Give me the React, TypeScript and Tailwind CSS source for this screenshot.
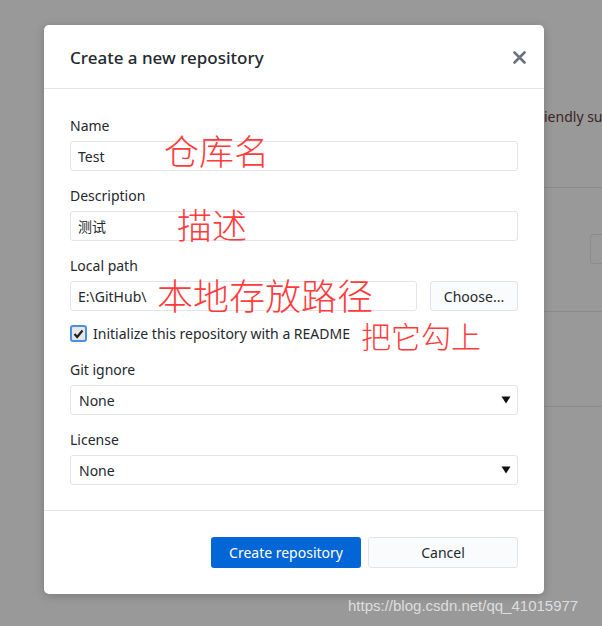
import React from "react";

const ui = { fontFamily: '"Noto Sans", "Noto Sans CJK SC", sans-serif' };
const cjk = { fontFamily: '"Noto Sans CJK SC", sans-serif' };

function Field({ label, children }: { label: string; children: React.ReactNode }) {
  return (
    <div className="flex flex-col">
      <div className="text-[14px] leading-[20px] text-[#24292e] mb-[5px]">{label}</div>
      {children}
    </div>
  );
}

function Input({ value, className = "" }: { value: string; className?: string }) {
  return (
    <div className={`h-[30px] rounded-[3px] border border-[#e1e4e8] bg-white flex items-center px-[7px] text-[14px] text-[#24292e] ${className}`}>
      {value}
    </div>
  );
}

function Select({ value }: { value: string }) {
  return (
    <div className="h-[30px] rounded-[3px] border border-[#e1e4e8] bg-white flex items-center justify-between pl-[8px] pr-[6px] text-[14px] text-[#24292e]">
      <span>{value}</span>
      <svg width="10" height="8" viewBox="0 0 10 8"><path d="M0.5 0.5 L9.5 0.5 L5 7.5 Z" fill="#111" /></svg>
    </div>
  );
}

export default function App() {
  return (
    <div className="relative w-[602px] h-[626px] bg-[#999999] overflow-hidden" style={ui}>
      {/* background page remnants */}
      <div className="absolute left-[544px] top-[106px] text-[14px] text-[#3a2626] whitespace-nowrap">iendly su</div>
      <div className="absolute left-[543px] right-0 top-[187px] h-px bg-[#8a8a8a]" />
      <div className="absolute left-[590px] top-[234px] w-[20px] h-[30px] border border-[#8c8c8c] rounded-[3px]" />
      <div className="absolute left-[543px] right-0 top-[311px] h-px bg-[#8a8a8a]" />
      <div className="absolute left-[543px] right-0 top-[406px] h-px bg-[#8a8a8a]" />

      {/* dialog */}
      <div className="absolute left-[44px] top-[25px] w-[500px] h-[569px] bg-white rounded-[5px] shadow-[0_2px_10px_rgba(0,0,0,0.2)] flex flex-col">
        <div className="h-[64px] border-b border-[#e1e4e8] flex items-center justify-between pl-[26px] pr-[18px]">
          <div className="text-[17px] text-[#24292e] font-medium mt-[2px]">Create a new repository</div>
          <svg width="13" height="13" viewBox="0 0 13 13" className="mt-[2px]">
            <path d="M1.5 1.5 L11.5 11.5 M11.5 1.5 L1.5 11.5" stroke="#6a737d" strokeWidth="2.6" strokeLinecap="round" />
          </svg>
        </div>

        <div className="flex-1 flex flex-col gap-[15px] px-[26px] pt-[27px] border-b border-[#e1e4e8]">
          <Field label="Name"><Input value="Test" /></Field>
          <Field label="Description"><Input value="测试" /></Field>
          <Field label="Local path">
            <div className="flex gap-[13px]">
              <Input value="E:\GitHub\" className="flex-1" />
              <div className="w-[88px] h-[30px] rounded-[3px] border border-[#e1e4e8] bg-[#fafbfc] flex items-center justify-center text-[14px] text-[#24292e]">Choose...</div>
            </div>
          </Field>
          <div className="h-[19px] flex items-center gap-[6px] -mt-[2px] mb-[2px]">
            <div className="w-[17px] h-[17px] rounded-[3px] border-2 border-[#4a90e2] bg-[#e6e6e6] flex items-center justify-center">
              <svg width="11" height="10" viewBox="0 0 11 10"><path d="M1.5 5 L4.2 8 L9.5 1.5" stroke="#222" strokeWidth="2.2" fill="none" /></svg>
            </div>
            <span className="text-[14px] text-[#24292e]">Initialize this repository with a README</span>
          </div>
          <Field label="Git ignore"><Select value="None" /></Field>
          <Field label="License"><Select value="None" /></Field>
        </div>

        <div className="h-[83px] flex items-center justify-end gap-[7px] px-[26px]">
          <div className="w-[150px] h-[31px] rounded-[3px] bg-[#0366d6] text-white text-[14px] flex items-center justify-center">Create repository</div>
          <div className="w-[150px] h-[31px] rounded-[3px] border border-[#e1e4e8] bg-[#fafbfc] text-[#24292e] text-[14px] flex items-center justify-center">Cancel</div>
        </div>
      </div>

      {/* red annotations */}
      <div className="absolute left-[164px] top-[128px] text-[35px] leading-[44px] text-[#ff3b3b] font-light whitespace-nowrap" style={cjk}>仓库名</div>
      <div className="absolute left-[177px] top-[202px] text-[35px] leading-[44px] text-[#ff3b3b] font-light whitespace-nowrap" style={cjk}>描述</div>
      <div className="absolute left-[157px] top-[272px] text-[36px] leading-[44px] text-[#ff3b3b] font-light whitespace-nowrap" style={cjk}>本地存放路径</div>
      <div className="absolute left-[361px] top-[316px] text-[30px] leading-[38px] text-[#ff3b3b] font-light whitespace-nowrap" style={cjk}>把它勾上</div>

      <div className="absolute left-[348px] top-[595px] text-[15px] text-[#dedede] whitespace-nowrap" style={{ fontFamily: '"Liberation Sans", Arial, sans-serif' }}>https://blog.csdn.net/qq_41015977</div>
    </div>
  );
}
